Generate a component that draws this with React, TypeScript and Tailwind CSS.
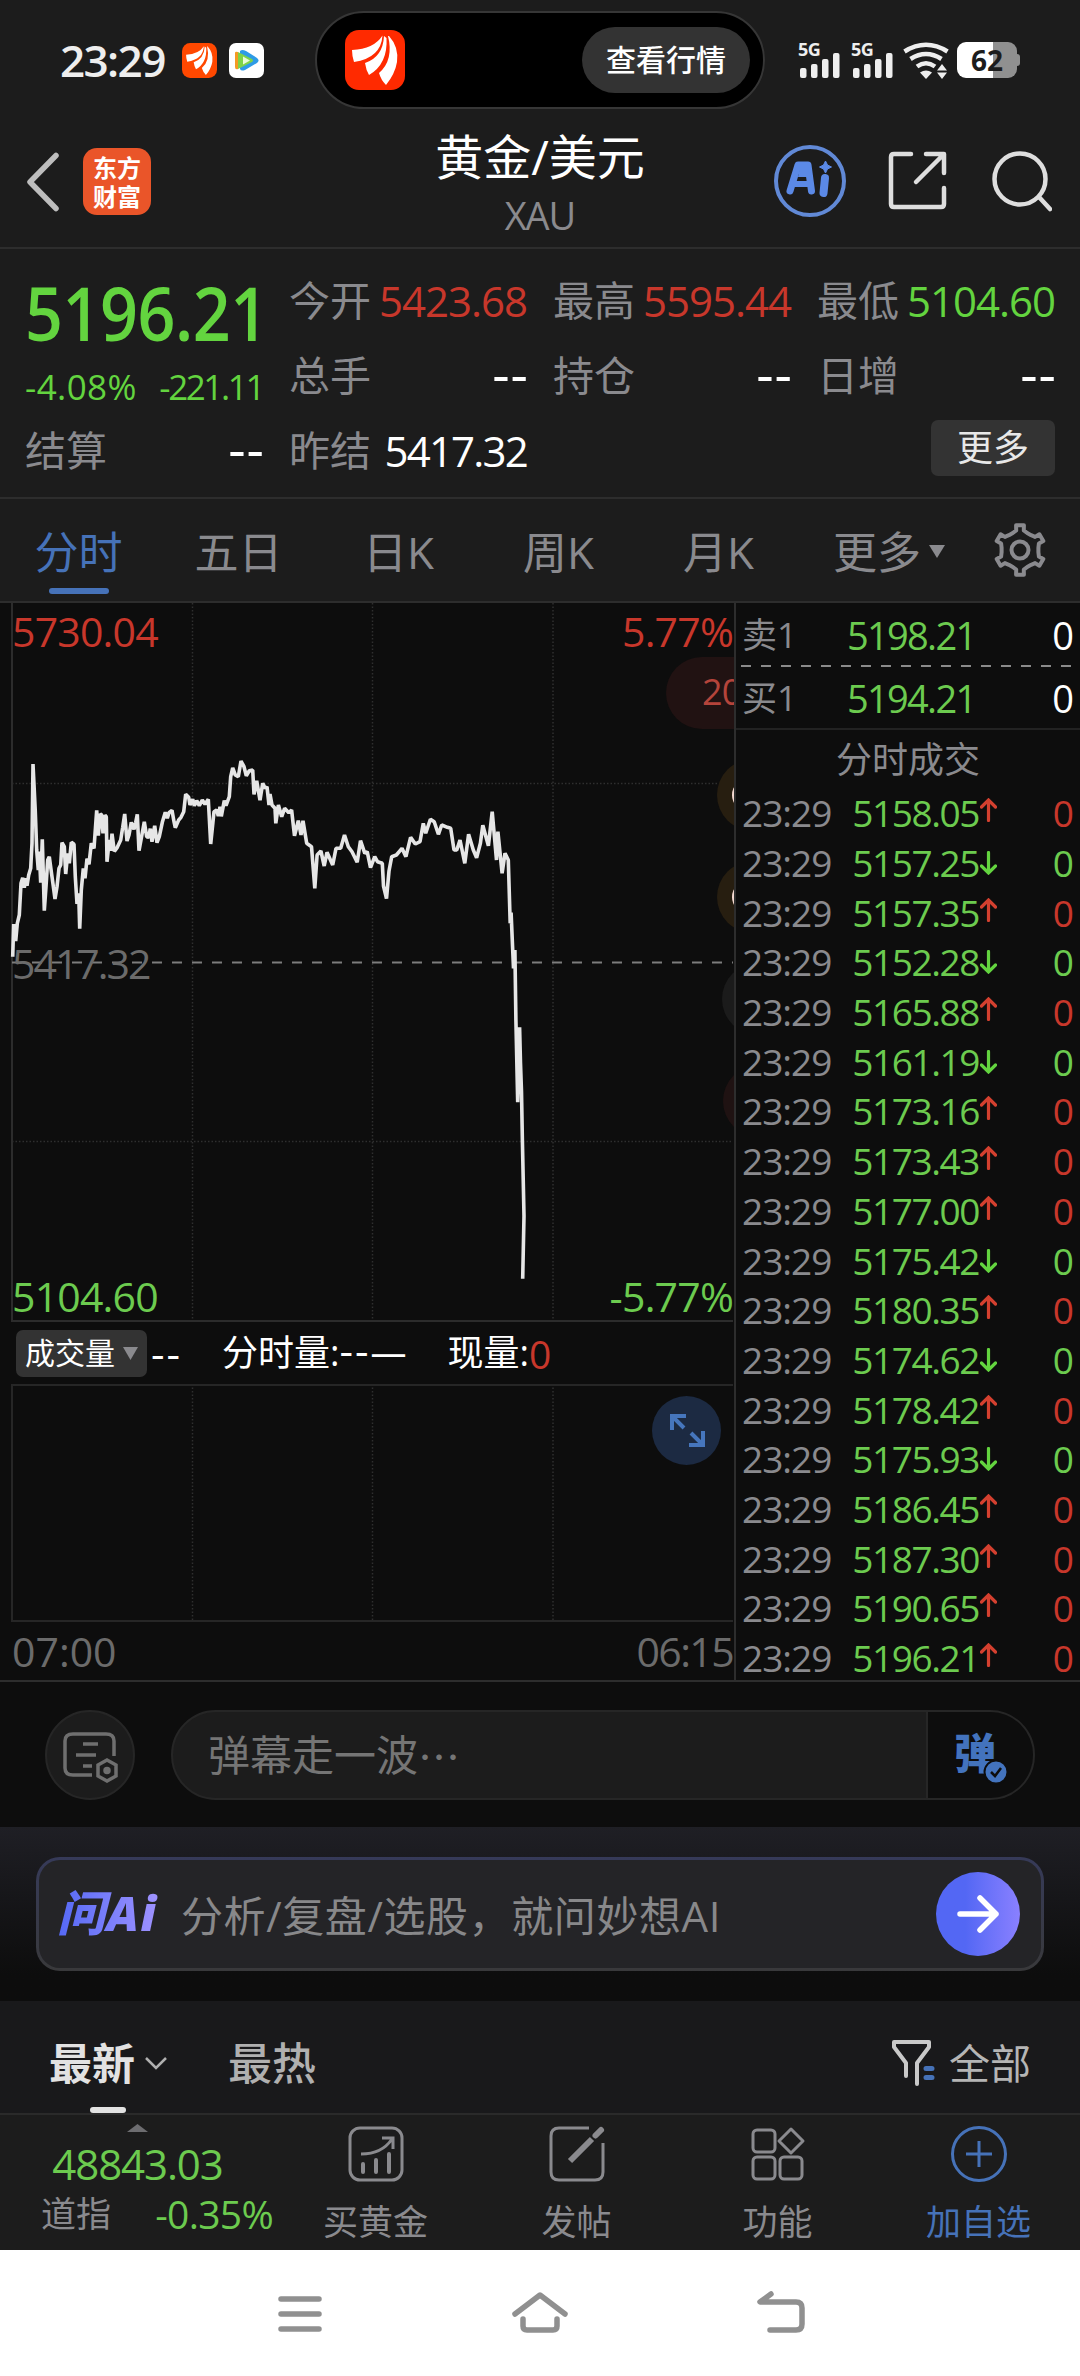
import React from 'react';
import clsx from 'clsx';

type Dir = 'up' | 'down';

const trades: { price: string; dir: Dir }[] = [
  { price: '5158.05', dir: 'up' },
  { price: '5157.25', dir: 'down' },
  { price: '5157.35', dir: 'up' },
  { price: '5152.28', dir: 'down' },
  { price: '5165.88', dir: 'up' },
  { price: '5161.19', dir: 'down' },
  { price: '5173.16', dir: 'up' },
  { price: '5173.43', dir: 'up' },
  { price: '5177.00', dir: 'up' },
  { price: '5175.42', dir: 'down' },
  { price: '5180.35', dir: 'up' },
  { price: '5174.62', dir: 'down' },
  { price: '5178.42', dir: 'up' },
  { price: '5175.93', dir: 'down' },
  { price: '5186.45', dir: 'up' },
  { price: '5187.30', dir: 'up' },
  { price: '5190.65', dir: 'up' },
  { price: '5196.21', dir: 'up' },
];

const tabs = ['分时', '五日', '日K', '周K', '月K'];

// intraday price line, in chart pixels
const priceLine =
  '12.7,353.7 13.7,321 15.7,338 17.3,320.3 19.3,312 21,280.3 22.7,274.7 24.3,284.7 25.7,275.3 27,282.7 28.7,272 30.7,265.3 32,240.3 33,161 35.3,208.7 36.7,247 38.3,267 39.3,248.7 40.7,279.7 42.3,236.3 44.3,307.7 46,283.7 47.7,257 49.3,253.7 51.3,268.7 53,281 55,296 57,283.7 59,265.3 60.7,262 62,239.7 64.3,243.7 65.7,271 67.7,250.3 69.3,260.3 71.3,239.3 74,241.3 75.3,273.7 77,301 78.7,290.3 79.7,325.7 81.3,287 83.3,265.3 85,275.3 87,255.7 89,261.3 91.3,240.3 94,245.3 96.7,207.3 98.3,232.7 100.3,211 101.7,212 103,230.3 105,212.3 106.3,213.7 107,258.7 109.3,237 110.7,247.7 112,230.7 114.3,248.3 117.3,244.3 120.7,237 122.7,224.3 124.7,211 127,238 129,232 131.3,219.3 134,226.3 135.7,219.3 137.3,211.3 139,247.7 141,237 144.3,218.7 146.7,233.7 148.7,234.3 150.3,225.7 152,238.7 154.7,222.7 157,239.7 159.3,233.7 162.3,219.3 165.3,209.3 167.3,215.3 169,209.7 172,207.3 174,218.7 175.3,224.7 178.7,217 181,214.3 183.7,208.7 185.7,191.3 188.7,194.3 190,202 192.7,196.3 194.3,202.7 196.7,197.7 199.3,202.7 202.3,197 205,201.3 208.3,196.3 210.7,241 214,208.7 216.7,207 218.3,213 220,203.7 221.3,213.3 224.3,197.7 226,202.7 229.3,193.7 230.7,173.7 232.7,165 235.3,172 238.3,173.7 241,158 244,163.7 246.3,172.7 249.3,167.7 252.7,167 254,191.3 256.7,177.7 260,197.3 262.7,180.3 265.3,185.3 267,183.7 269,202 270,191 272,202 275,205.3 275.8,220.3 278.4,202 281.7,213.7 284.6,205.3 288.8,209.7 291.6,207 294.5,232.7 298.3,217.7 301,232 303,217.7 306.7,240.3 311.5,243.7 314.8,285.3 317.1,252 320.9,248 324.2,263 327,249.3 332.7,262 336,245.3 340.7,245.3 344.5,232 348.3,243.7 352,248.7 357.2,259.3 360.5,237.7 364.8,250.3 367.2,248.7 370.5,264.7 374.7,253.7 377.5,258.7 382.3,260.3 383.5,283 386.5,295.7 389,268 391.7,253.7 396.4,252 402,245.3 405.9,253.7 410.6,234.3 415.3,241 420,238.7 423.3,220.3 425.7,230.3 430.4,216.3 434.2,218.7 438.4,231.3 441.7,222 447.4,224.3 450.7,225.3 454,247 456.8,247 460,237 464.8,260.3 468.6,231.3 473.3,247 476.6,254.7 480.4,240.3 482.8,222.3 488.4,242.7 492.2,208.7 496.5,257 497.9,228.7 502.1,270.3 505,250.3 508.3,257 510.2,320.3 511.1,309.7 513.5,365.3 514.9,347 515.9,417 517.7,499.3 519.6,424.3 520.5,460.3 521.5,488.7 522.4,538.3 524,613 522.7,675.7';

const gearPoints = () => {
  const pts: string[] = [];
  for (let i = 0; i < 6; i++) {
    const spokes: [number, number][] = [[-23, 18.5], [-11, 20], [-9, 25], [9, 25], [11, 20], [23, 18.5]];
    spokes.forEach(([deg, r]) => {
      const a = ((i * 60 + deg - 90) * Math.PI) / 180;
      pts.push(`${(27 + r * Math.cos(a)).toFixed(1)},${(27 + r * Math.sin(a)).toFixed(1)}`);
    });
  }
  return pts.join(' ');
};

const BrandMark: React.FC<{ className?: string; color: string }> = ({ className, color }) => (
  <svg className={className} viewBox="0 0 60 60">
    <rect width="60" height="60" rx="14" fill={color} />
    <path d="M7 20Q29 19 37.5 5.500Q36 28 9 32Q7 26 7 20Z" fill="#fff" />
    <path d="M39 6Q38 27 20 33Q21 40 24 45Q43 34 41.500 8Z" fill="#fff" />
    <path d="M44 6Q54 17 52 32Q50 44 41 55Q36 50 34 43Q49 30 43 6Z" fill="#fff" />
  </svg>
);

const Signal = () => (
  <div className="relative h-[36px] w-[44px]">
    <span className="absolute left-0 -top-[2px] text-[18px] leading-none font-bold tracking-[-0.5px]">5G</span>
    <svg className="h-[36px] w-[44px]" viewBox="0 0 44 36" fill="#eee">
      <rect x="2" y="26" width="6.500" height="10" rx="2" />
      <rect x="13" y="22" width="6.500" height="14" rx="2" />
      <rect x="24" y="17" width="6.500" height="19" rx="2" />
      <rect x="35" y="11" width="6.500" height="25" rx="2" />
    </svg>
  </div>
);

const StatusBar = () => (
  <div className="flex h-[120px] items-center text-[#eee]">
    <div className="flex w-[315px] items-center pl-[60px]">
      <span className="w-[122px] text-[44px] leading-none font-semibold tracking-[-1.6px]">23:29</span>
      <BrandMark className="h-[35px] w-[35px]" color="#ff4800" />
      <svg className="ml-[12px] h-[35px] w-[35px]" viewBox="0 0 35 35">
        <rect width="35" height="35" rx="7" fill="#fff" />
        <path d="M6 10Q6 8 9 9V26Q6 27 6 24Z" fill="#f59a23" />
        <path d="M11 8Q13 6 17 8L28 15Q31 17.500 28 20L16 27Q12 28.500 11 26Z" fill="#2e9be6" />
        <path d="M9 9L23 16Q25 17.500 23 19L9 26Z" fill="#7ed348" />
        <path d="M14 13.500L21 17.500L14 21.500Z" fill="#e9fbd8" />
      </svg>
    </div>
    <div className="flex h-[98px] w-[450px] items-center justify-between rounded-full border-2 border-[#363636] bg-black pr-[13px] pl-[28px]">
      <BrandMark className="h-[60px] w-[60px]" color="#ff2a00" />
      <div className="flex h-[66px] w-[168px] items-center justify-center rounded-full bg-[#333] text-[30px] leading-none font-medium text-white">
        查看行情
      </div>
    </div>
    <div className="flex items-center pl-[33px]">
      <Signal />
      <div className="w-[9px]" />
      <Signal />
      <svg className="ml-[8px] h-[37px] w-[48px]" viewBox="0 0 48 37" fill="none" stroke="#eee" strokeWidth="4.500">
        <path d="M1.500 9.500Q23 -4 44.500 9.500" />
        <path d="M7.500 17Q23 7 38.500 17" />
        <path d="M14 24.500Q23 18 32 24.500" />
        <path d="M17 30.500Q23 26.500 29 30.500L23 37Z" fill="#eee" stroke="none" />
        <path d="M39 22l5 6.500h-10zM39 37l5-6.500h-10z" fill="#eee" stroke="none" />
      </svg>
      <div className="ml-[6px] flex h-[36px] w-[60px] items-center justify-center rounded-[9px] bg-linear-to-r from-white from-60% to-[#909090] to-60%">
        <span className="text-[28px] leading-none font-bold text-[#1c1c1c]">62</span>
      </div>
      <div className="h-[12px] w-[3px] rounded-r bg-[#909090]" />
    </div>
  </div>
);

const Header = () => (
  <div className="flex h-[129px] items-start justify-between border-b-2 border-[#2d2d2d]">
    <div className="flex w-[300px] items-center gap-[24px] pt-[28px] pl-[25px]">
      <svg className="h-[60px] w-[34px]" viewBox="0 0 34 60" fill="none" stroke="#bdbdbd" strokeWidth="5.500" strokeLinecap="round" strokeLinejoin="round">
        <path d="M31 3.500L5 30L31 56.500" />
      </svg>
      <div className="flex h-[67px] w-[68px] flex-col items-center justify-center rounded-[14px] bg-[#ea5529] text-[24px] leading-[29px] font-bold text-white">
        <span>东方</span>
        <span>财富</span>
      </div>
    </div>
    <div className="flex flex-col items-center pt-[13px]">
      <span className="text-[48px] leading-[48px] text-white">黄金/美元</span>
      <span className="mt-[15px] text-[38px] leading-[38px] tracking-[-1px] text-[#8a8a8e]">XAU</span>
    </div>
    <div className="flex w-[300px] items-center justify-end gap-[42px] pt-[25px] pr-[28px]">
      <svg className="h-[72px] w-[72px] shrink-0" viewBox="0 0 72 72">
        <circle cx="36" cy="36" r="34" fill="none" stroke="#6189d6" strokeWidth="4" />
        <path d="M16 46L24 20H34L37.500 46" fill="none" stroke="#5b89e6" strokeWidth="7" strokeLinejoin="round" strokeLinecap="round" />
        <path d="M21 39H37" stroke="#5b89e6" strokeWidth="6" />
        <path d="M26 22h8l2 10h-12z" fill="#5b89e6" />
        <path d="M51 33L49.500 48" stroke="#5b89e6" strokeWidth="8" strokeLinecap="round" />
        <path d="M51.500 16l2 4 4 2-4 2-2 4-2-4-4-2 4-2z" fill="#5b89e6" stroke="#5b89e6" />
      </svg>
      <svg className="h-[60px] w-[60px] shrink-0" viewBox="0 0 60 60" fill="none" stroke="#dedede" strokeWidth="4.500" strokeLinecap="round" strokeLinejoin="round">
        <path d="M23 3H6Q3 3 3 6V53Q3 56 6 56H53Q56 56 56 53V37" />
        <path d="M38 3H56V22M55 4L28 31" />
      </svg>
      <svg className="h-[62px] w-[62px] shrink-0" viewBox="0 0 62 62" fill="none" stroke="#dedede" strokeWidth="4.500" strokeLinecap="round">
        <circle cx="30" cy="29" r="25.500" />
        <path d="M49 47L60 59" />
      </svg>
    </div>
  </div>
);

const Dashes: React.FC = () => (
  <span className="-mr-[2px] pb-[5px] text-[54px] leading-none tracking-[1px] text-white">--</span>
);

const QuoteCell: React.FC<{ label: string; value?: string; color?: string }> = ({ label, value, color }) => (
  <div className="flex h-[75px] items-center justify-between whitespace-nowrap">
    <span className="text-[41px] leading-none text-[#8a8a8e]">{label}</span>
    {value ? <span className={clsx('text-[42px] leading-none', color)}>{value}</span> : <Dashes />}
  </div>
);

const Quote = () => (
  <div className="grid h-[250px] grid-cols-4 content-start gap-x-[26px] border-b-2 border-[#2d2d2d] px-[25px] pt-[14px]">
    <div className="row-span-2 flex h-[150px] flex-col whitespace-nowrap text-[#63d43f]">
      <span className="origin-left scale-x-[0.885] pt-[12px] text-[75px] leading-[75px] font-semibold tracking-[-0.5px]">5196.21</span>
      <div className="flex justify-between pt-[19px] text-[35px] leading-[35px]">
        <span className="tracking-[0.4px]">-4.08%</span>
        <span className="tracking-[-2.400px]">-221.11</span>
      </div>
    </div>
    <QuoteCell label="今开" value="5423.68" color="tracking-[-1px] text-[#c8372b]" />
    <QuoteCell label="最高" value="5595.44" color="tracking-[-1px] text-[#c8372b]" />
    <QuoteCell label="最低" value="5104.60" color="tracking-[-1px] text-[#63d43f]" />
    <QuoteCell label="总手" />
    <QuoteCell label="持仓" />
    <QuoteCell label="日增" />
    <QuoteCell label="结算" />
    <QuoteCell label="昨结" value="5417.32" color="tracking-[-1.800px] text-white font-medium" />
    <div />
    <div className="flex h-[75px] items-center justify-end pb-[5px]">
      <div className="flex h-[56px] w-[124px] items-center justify-center rounded-[7px] bg-[#333] text-[36px] leading-none text-[#e8e8e8]">更多</div>
    </div>
  </div>
);

const PeriodTabs = () => (
  <div className="flex h-[104px] border-b-2 border-[#2d2d2d] text-[44px] leading-none text-[#8a8a8e]">
    {tabs.map((t, i) => (
      <div key={t} className={clsx('relative flex w-[160px] items-center justify-center pt-[3px] pr-[3px]', i === 0 && 'text-[#4672b8]')}>
        {t}
        {i === 0 && <div className="absolute bottom-[7px] left-[49px] h-[6px] w-[60px] rounded-[3px] bg-[#4672b8]" />}
      </div>
    ))}
    <div className="flex w-[178px] items-center justify-center gap-[8px] pt-[3px]">
      更多
      <svg className="h-[13px] w-[16px]" viewBox="0 0 16 13" fill="#8a8a8e">
        <path d="M0 0H16L8 13Z" />
      </svg>
    </div>
    <div className="flex w-[84px] items-center justify-center">
      <svg className="h-[54px] w-[54px]" viewBox="0 0 54 54" fill="none" stroke="#8a8a8e" strokeWidth="4" strokeLinejoin="round">
        <polygon points={gearPoints()} />
        <circle cx="27" cy="27" r="8.500" />
      </svg>
    </div>
  </div>
);

const PriceChart = () => (
  <div className="relative h-[719px]">
    <svg className="h-[719px] w-[734px]" viewBox="0 0 734 719" fill="none">
      <g stroke="#2f2f2f" strokeWidth="1.500" strokeDasharray="1.500 2">
        <path d="M192.500 0V718M372.500 0V718M553 0V718M12 180.500H733M12 538.500H733" />
      </g>
      <path d="M12 0V718H733" stroke="#2c2c2c" strokeWidth="2" />
      <rect x="666" y="54" width="120" height="72" rx="36" fill="#211212" />
      <circle cx="753" cy="192" r="36" fill="#271e10" />
      <circle cx="753" cy="294" r="36" fill="#271e10" />
      <circle cx="758" cy="396" r="36" fill="#1b1b1b" />
      <circle cx="759" cy="498" r="36" fill="#1f1212" />
      <ellipse cx="736" cy="192" rx="4" ry="9" fill="#f3d9d0" />
      <ellipse cx="736" cy="294" rx="4" ry="9" fill="#f3d9d0" />
      <path d="M12 359.500H733" stroke="#7d7d7d" strokeWidth="2" strokeDasharray="10 10" />
      <polyline points={priceLine} stroke="#e6e6e6" strokeWidth="3.600" strokeLinejoin="bevel" />
    </svg>
    <div className="absolute inset-0 text-[41px] leading-none tracking-[-0.8px]">
      <span className="absolute top-[8px] left-[12px] text-[#c8372b]">5730.04</span>
      <span className="absolute top-[8px] right-[1px] text-[#c8372b]">5.77%</span>
      <span className="absolute top-[340px] left-[12px] tracking-[-2px] text-[#6b6b6b]">5417.32</span>
      <span className="absolute top-[673px] left-[12px] text-[#6ccb4f]">5104.60</span>
      <span className="absolute top-[673px] right-[1px] text-[#6ccb4f]">-5.77%</span>
      <span className="absolute top-[71px] left-[702px] text-[36px] text-[#b5443b]">20</span>
    </div>
  </div>
);

const VolumeChart = () => (
  <>
    <div className="flex h-[62px] items-center pl-[16px] text-[36px] leading-none whitespace-nowrap text-white">
      <div className="flex h-[47px] w-[131px] items-center gap-[8px] rounded-[7px] bg-[#333] pl-[9px] text-[30px]">
        成交量
        <svg className="h-[13px] w-[15px]" viewBox="0 0 15 13" fill="#8a8a8e">
          <path d="M0 0H15L7.500 13Z" />
        </svg>
      </div>
      <span className="w-[75px] pl-[4px] text-[42px] tracking-[2px]">--</span>
      <span>分时量:</span>
      <span className="pb-[6px] text-[42px] tracking-[2px]">--</span>
      <span className="w-[77px]">—</span>
      <span>现量:</span>
      <span className="text-[39px] text-[#c8372b]">0</span>
    </div>
    <div className="relative h-[238px]">
      <svg className="h-[238px] w-[734px]" viewBox="0 0 734 238" fill="none">
        <path d="M192.500 0V237M372.500 0V237M553 0V237" stroke="#2f2f2f" strokeWidth="1.500" strokeDasharray="1.500 2" />
        <path d="M733 1H12V237H733" stroke="#262626" strokeWidth="2" />
      </svg>
      <div className="absolute top-[12px] left-[652px] h-[69px] w-[69px] rounded-full bg-[#1c2a42]">
        <svg className="h-[69px] w-[69px]" viewBox="0 0 69 69" fill="none" stroke="#4676bd" strokeWidth="4">
          <path d="M34 20H20V34M20 20L32 32" />
          <path d="M37 49H51V35M51 49L39 37" />
        </svg>
      </div>
    </div>
    <div className="flex h-[59px] items-center justify-between pr-[1px] pl-[12px] text-[41px] leading-none text-[#6b6b6b]">
      <span>07:00</span>
      <span className="tracking-[-1.600px]">06:15</span>
    </div>
  </>
);

const QueueRow: React.FC<{ label: string; price: string }> = ({ label, price }) => (
  <div className="flex h-[61px] items-center pr-[6px] text-[38px] leading-none">
    <span className="w-[105px] text-[35px] text-[#8a8a8e]">{label}</span>
    <span className="tracking-[-1.700px] text-[#6ccb4f]">{price}</span>
    <span className="ml-auto text-white">0</span>
  </div>
);

const TradeArrow: React.FC<{ dir: Dir }> = ({ dir }) => (
  <svg
    className={clsx('ml-[1px] h-[24px] w-[17px]', dir === 'up' ? 'mb-[5px]' : 'mt-[1px] rotate-180')}
    viewBox="0 0 17 24"
    fill="none"
    stroke={dir === 'up' ? '#d4402f' : '#63d43f'}
    strokeWidth="3.200"
    strokeLinecap="round"
  >
    <path d="M8.500 2V22.500M1.500 9L8.500 2L15.500 9" />
  </svg>
);

const SidePanel = () => (
  <div className="flex w-[346px] flex-col border-l-2 border-[#2d2d2d]">
    <div className="pt-[1px] pl-[6px]">
      <QueueRow label="卖1" price="5198.21" />
    </div>
    <svg className="h-[2px] w-[344px] shrink-0" viewBox="0 0 344 2">
      <path d="M5 1H338" stroke="#8a8a8a" strokeWidth="2" strokeDasharray="10 10" />
    </svg>
    <div className="border-b-2 border-[#222] pl-[6px]">
      <QueueRow label="买1" price="5194.21" />
    </div>
    <div className="flex h-[58px] shrink-0 items-center justify-center pt-[1px] text-[36px] leading-none text-[#8a8a8e]">分时成交</div>
    {trades.map((t, i) => (
      <div key={i} className="flex h-[49.7px] shrink-0 items-center pr-[6px] pl-[6px] text-[37px] leading-none">
        <span className="w-[90px] tracking-[-1px] text-[#8a8a8e]">23:29</span>
        <span className="w-[147px] text-right tracking-[-1.400px] text-[#6ccb4f]">{t.price}</span>
        <TradeArrow dir={t.dir} />
        <span className={clsx('ml-auto', t.dir === 'up' ? 'text-[#c8372b]' : 'text-[#6ccb4f]')}>0</span>
      </div>
    ))}
  </div>
);

const DanmuBar = () => (
  <div className="flex h-[145px] items-center bg-[#0d0d0d] pl-[45px]">
    <div className="flex h-[90px] w-[90px] items-center justify-center rounded-full border-2 border-[#262626] bg-[#1c1c1c]">
      <svg className="h-[56px] w-[58px]" viewBox="0 0 58 56" fill="none" stroke="#6f6f6f" strokeWidth="3.500">
        <path d="M31 48H12Q4 48 4 41V14Q4 7 12 7H45Q53 7 53 14V29" />
        <path d="M22 17H37M15 28H35M22 39H31" />
        <path d="M46 33L55 38V49L46 54L37 49V38Z" />
        <circle cx="46" cy="43.500" r="2" fill="#6f6f6f" />
      </svg>
    </div>
    <div className="ml-[36px] flex h-[90px] w-[864px] items-stretch overflow-hidden rounded-full border-2 border-[#262626] bg-[#1c1c1c]">
      <div className="flex flex-1 items-center pl-[35px] text-[42px] leading-none text-[#757575]">
        弹幕走一波<span className="font-['Noto_Sans_CJK_SC']">⋯</span>
      </div>
      <div className="relative w-[107px] border-l-2 border-[#262626] bg-[#0d0d0d] pt-[20px] pl-[26px] text-[42px] leading-none font-black text-[#4373bd]">
        弹
        <svg className="absolute top-[47px] left-[55px] h-[26px] w-[26px]" viewBox="0 0 26 26">
          <circle cx="13" cy="13" r="11.500" fill="#4373bd" stroke="#0d0d0d" strokeWidth="2" />
          <path d="M8 13l4 4 6-8" fill="none" stroke="#0d0d0d" strokeWidth="2.500" />
        </svg>
      </div>
    </div>
  </div>
);

const AskAi = () => (
  <div className="h-[174px] bg-linear-to-b from-[#1f1f25] to-[#0d0d0d] to-85% px-[36px] pt-[30px]">
    <div className="rounded-[24px] bg-linear-to-b from-[#363a59] to-[#39393b] p-[3px]">
      <div className="flex h-[108px] items-center rounded-[21px] bg-[#242427] pr-[21px] pl-[18px]">
        <div className="w-[124px] bg-linear-to-r from-[#5468f5] to-[#a294ff] to-85% bg-clip-text pb-[2px] text-[48px] leading-[58px] font-extrabold tracking-[1.500px] whitespace-nowrap text-transparent italic">
          问Ai
        </div>
        <span className="pt-[4px] text-[42px] leading-none tracking-[0.6px] whitespace-nowrap text-[#88888a]">分析/复盘/选股，就问妙想AI</span>
        <div className="ml-auto flex h-[84px] w-[84px] items-center justify-center rounded-full bg-linear-to-r from-[#5367f4] from-35% to-[#8a80ff]">
          <svg className="h-[42px] w-[44px]" viewBox="0 0 44 42" fill="none" stroke="#fff" strokeWidth="5.500" strokeLinecap="round" strokeLinejoin="round">
            <path d="M4 21H40M24 5L40 21L24 37" />
          </svg>
        </div>
      </div>
    </div>
  </div>
);

const FeedTabs = () => (
  <div className="relative flex h-[114px] items-center border-b-2 border-[#2a2a2a] bg-[#19191b] pt-[12px] pr-[49px] pl-[49px] text-[43px] leading-none">
    <span className="font-bold text-[#e2e2e2]">最新</span>
    <svg className="ml-[10px] h-[14px] w-[22px]" viewBox="0 0 22 14" fill="none" stroke="#b0b0b0" strokeWidth="2.500">
      <path d="M1 2L11 12L21 2" />
    </svg>
    <span className="ml-[61px] text-[44px] font-medium text-[#b0b0b0]">最热</span>
    <svg className="ml-auto h-[48px] w-[46px]" viewBox="0 0 46 48" fill="none" stroke="#c9c9c9" strokeWidth="4" strokeLinejoin="round" strokeLinecap="round">
      <path d="M15 37V24L3 8V3H38V8L26 24V45" />
      <path d="M35 29.500H41M35 38.500H41" stroke="#4672b8" strokeWidth="5" />
    </svg>
    <span className="ml-[12px] text-[41px] text-[#b5b5b5]">全部</span>
    <div className="absolute bottom-0 left-[90px] h-[6px] w-[36px] rounded-[3px] bg-[#e2e2e2]" />
  </div>
);

const NavItem: React.FC<{ label: string; active?: boolean; children: React.ReactNode }> = ({ label, active, children }) => (
  <div className={clsx('flex w-[201px] flex-col items-center pt-[10px]', active ? 'text-[#4672b8]' : 'text-[#8a8a8e]')}>
    <svg className="h-[58px] w-[58px]" viewBox="0 0 58 58" fill="none" stroke="currentColor" strokeWidth="3">
      {children}
    </svg>
    <span className="mt-[21px] text-[35px] leading-none">{label}</span>
  </div>
);

const BottomBar = () => (
  <div className="flex h-[135px] bg-[#1c1c1c]">
    <div className="flex w-[275px] flex-col items-center pt-[9px]">
      <svg className="h-[8px] w-[21px]" viewBox="0 0 21 8" fill="#6d6d70">
        <path d="M0 8L10.500 0L21 8Z" />
      </svg>
      <span className="mt-[11px] text-[42px] leading-[42px] tracking-[-1.100px] text-[#6ccb4f]">48843.03</span>
      <div className="mt-[9px] flex w-full items-center justify-between pr-[2px] pl-[41px]">
        <span className="text-[35px] leading-none text-[#8a8a8e]">道指</span>
        <span className="text-[39px] leading-none tracking-[-0.700px] text-[#6ccb4f]">-0.35%</span>
      </div>
    </div>
    <NavItem label="买黄金">
      <rect x="3" y="3" width="52" height="52" rx="10" />
      <path d="M14 29Q35 29 45 14M35 13H46V24" />
      <path d="M16 39V47M29 35V47M42 29V47" strokeWidth="4" strokeLinecap="round" />
    </NavItem>
    <NavItem label="发帖">
      <path d="M41 3H11Q3 3 3 11V47Q3 55 11 55H47Q55 55 55 47V18" />
      <path d="M22 36L44 14" strokeWidth="6" />
      <path d="M47.500 10.500L53 5" strokeWidth="6" strokeLinecap="round" />
    </NavItem>
    <NavItem label="功能">
      <rect x="4" y="5" width="22" height="22" rx="4" />
      <rect x="4" y="32" width="22" height="22" rx="4" />
      <rect x="31" y="32" width="22" height="22" rx="4" />
      <path d="M42 4L54 16L42 28L30 16Z" strokeLinejoin="round" />
    </NavItem>
    <NavItem label="加自选" active>
      <circle cx="29" cy="29" r="26.500" />
      <path d="M29 16V42M16 29H42" />
    </NavItem>
  </div>
);

const SystemNav = () => (
  <div className="flex h-[127px] items-center justify-center bg-white">
    <svg className="h-[60px] w-[600px]" viewBox="0 0 600 60" fill="none" stroke="#909090" strokeWidth="5.500" strokeLinecap="round" strokeLinejoin="round">
      <path d="M41 15H79M41 30H79M41 45H79" />
      <path d="M275 30L300 11L325 30" />
      <path d="M283 35V42Q283 46 287 46H313Q317 46 317 42V35" />
      <path d="M531 10L520 18H556Q562 18 562 24V40Q562 46 556 46H530" />
    </svg>
  </div>
);

const App: React.FC = () => {
  return (
    <div className="h-[2376px] w-[1080px] overflow-hidden bg-[#1c1c1c] font-['Open_Sans','Noto_Sans_CJK_SC',sans-serif]">
      <StatusBar />
      <Header />
      <Quote />
      <PeriodTabs />
      <div className="flex h-[1079px] border-b-2 border-[#2d2d2d] bg-[#0d0d0d]">
        <div className="w-[734px] overflow-hidden">
          <PriceChart />
          <VolumeChart />
        </div>
        <SidePanel />
      </div>
      <DanmuBar />
      <AskAi />
      <FeedTabs />
      <BottomBar />
      <SystemNav />
    </div>
  );
};

export default App;
